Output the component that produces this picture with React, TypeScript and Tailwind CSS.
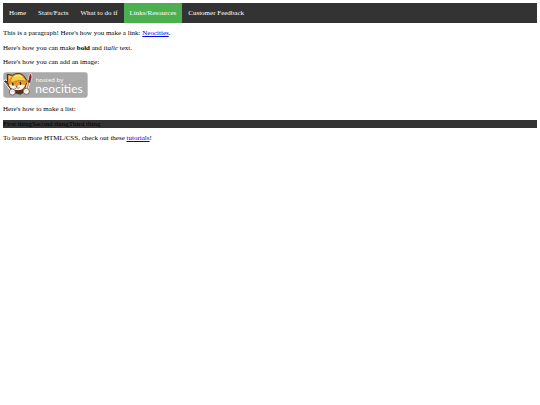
const navItems = [
  { label: 'Home', active: false },
  { label: 'Stats/Facts', active: false },
  { label: 'What to do if', active: false },
  { label: 'Links/Resources', active: true },
  { label: 'Customer Feedback', active: false },
];

const things = ['First thing', 'Second thing', 'Third thing'];

function NavBar() {
  return (
    <nav className="bg-[#333333]">
      <ul className="flex">
        {navItems.map((item) => (
          <li key={item.label}>
            <a
              href="#"
              className={
                item.active
                  ? 'block bg-[#4caf50] px-[6px] py-[6px] text-white'
                  : 'block px-[6px] py-[6px] text-white hover:bg-[#111111]'
              }
            >
              {item.label}
            </a>
          </li>
        ))}
      </ul>
    </nav>
  );
}

function NeocitiesBadge() {
  return (
    <svg width="85" height="26" viewBox="0 0 255 78" role="img" aria-label="hosted by neocities">
      <rect x="1" y="1" width="253" height="76" rx="9" fill="#a9a9a9" />
      {/* pencil */}
      <path d="M1 27 L9 23 L31 50 L24 56 Z" fill="#3a302c" stroke="#fff" strokeWidth="3" strokeLinejoin="round" />
      <path d="M8 31 L24 49" stroke="#bdb5ae" strokeWidth="2" />
      {/* body */}
      <path d="M30 50 L58 50 L62 62 L52 68 L34 64 Z" fill="#4a3526" />
      {/* head */}
      <path d="M14 31 L13 7 L29 10 C41 1 57 3 65 15 L74 29 L68 40 C66 52 56 57 43 56 C27 56 17 47 14 31 Z" fill="#f0982e" stroke="#3f2a1c" strokeWidth="3" strokeLinejoin="round" />
      <path d="M17 11 L26 13 L19 22 Z" fill="#f7c07a" />
      {/* cap */}
      <path d="M23 24 C28 5 55 1 65 20 L73 29 C57 24 40 24 25 33 Z" fill="#f6cf45" stroke="#a8741d" strokeWidth="2" strokeLinejoin="round" />
      <path d="M33 15 C41 8 51 8 57 15" fill="none" stroke="#ffe98e" strokeWidth="4" />
      {/* face */}
      <path d="M18 38 C25 37 33 40 40 43 C49 36 58 37 66 39 C63 50 54 54 43 54 C30 54 22 49 18 38 Z" fill="#fff6e6" />
      <path d="M29 34 L30 39 M52 31 L53 37" stroke="#302019" strokeWidth="4" strokeLinecap="round" />
      <path d="M37 42 L45 41 L41 45 Z" fill="#53342a" />
      <path d="M35 49 C39 50 41 48 41 46 C44 50 48 49 50 46" fill="none" stroke="#53342a" strokeWidth="2" />
      {/* paintbrush */}
      <path d="M79 25 L71 55" stroke="#fff" strokeWidth="8" strokeLinecap="round" />
      <path d="M79 24 L71 55" stroke="#c98c43" strokeWidth="4" strokeLinecap="round" />
      <path d="M83 3 C89 12 87 22 82 30 L76 28 C75 18 78 9 83 3 Z" fill="#8b2634" stroke="#fff" strokeWidth="2" />
      <path d="M76 24 L83 26 L81 33 L75 31 Z" fill="#49312a" />
      {/* paws */}
      <circle cx="28" cy="60" r="9" fill="#fff" stroke="#4b3426" strokeWidth="2" />
      <path d="M25 57 L25 61 M30 56 L30 60" stroke="#e0a766" strokeWidth="2" />
      <circle cx="70" cy="58" r="9" fill="#fff" stroke="#4b3426" strokeWidth="2" />
      <path d="M67 55 L67 59 M72 55 L72 59" stroke="#e0a766" strokeWidth="2" />
      <text x="98" y="29" fontSize="18" fill="#fff" className="font-['Open_Sans',sans-serif]">
        hosted by
      </text>
      <text x="97" y="62" fontSize="36" fill="#fff" className="font-[Lato,sans-serif]">
        neocities
      </text>
    </svg>
  );
}

export default function App() {
  return (
    <div className="bg-white p-[3px] font-['Liberation_Serif',serif] text-[7px] leading-[8px] text-black">
      <NavBar />
      <p className="mt-[6px]">
        This is a paragraph! Here's how you make a link:{' '}
        <a href="#" className="text-[#0000ee] underline">Neocities</a>.
      </p>
      <p className="mt-[7px]">
        Here's how you can make <strong>bold</strong> and <em>italic</em> text.
      </p>
      <p className="mt-[6px]">Here's how you can add an image:</p>
      <div className="mt-[6px] flex">
        <NeocitiesBadge />
      </div>
      <p className="mt-[7px]">Here's how to make a list:</p>
      <ul className="mt-[7px] flex bg-[#333333]">
        {things.map((thing) => (
          <li key={thing}>{thing}</li>
        ))}
      </ul>
      <p className="mt-[6px]">
        To learn more HTML/CSS, check out these{' '}
        <a href="#" className="text-[#0000ee] underline">tutorials</a>!
      </p>
    </div>
  );
}
